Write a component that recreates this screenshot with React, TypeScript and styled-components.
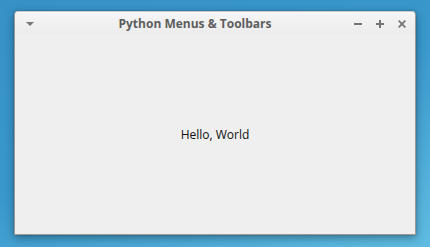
import React from "react";
import styled, { createGlobalStyle } from "styled-components";

const Global = createGlobalStyle`
  html, body { margin: 0; padding: 0; }
  body {
    width: 430px;
    height: 247px;
    overflow: hidden;
    background: linear-gradient(160deg, #3691c6 0%, #3a98cc 50%, #5fbde2 100%);
    font-family: "Open Sans", "Noto Sans", sans-serif;
  }
`;

const Desktop = styled.div`
  box-sizing: border-box;
  width: 430px;
  height: 247px;
  padding: 11px 14px 12px 14px;
  display: flex;
`;

const Window = styled.div`
  flex: 1;
  display: flex;
  flex-direction: column;
  background: #efefef;
  border: 1px solid #9a9a9a;
  border-top-color: #c8c8c8;
  border-radius: 4px 4px 0 0;
  box-shadow: 0 3px 10px rgba(0, 0, 0, 0.35), 0 0 2px rgba(0, 0, 0, 0.3);
  overflow: hidden;
`;

const TitleBar = styled.div`
  height: 21px;
  display: flex;
  align-items: center;
  padding: 0 5px 0 8px;
  background: linear-gradient(#f5f5f5, #ececec);
  border-top: 1px solid #fbfbfb;
`;

const TitleText = styled.div`
  flex: 1;
  text-align: center;
  font-weight: 700;
  font-size: 12px;
  color: #5e5e5e;
  padding-left: 9px;
`;

const IconButton = styled.div<{ $w?: number }>`
  width: ${(p) => p.$w ?? 16}px;
  height: 16px;
  display: flex;
  align-items: center;
  justify-content: center;
  margin-left: ${(p) => (p.$w ? 0 : 6)}px;
`;

const Content = styled.div`
  flex: 1;
  display: flex;
  align-items: center;
  justify-content: center;
  font-size: 12px;
  color: #111;
  padding-top: 1px;
`;

export default function App() {
  return (
    <>
      <Global />
      <Desktop>
        <Window>
          <TitleBar>
            <IconButton $w={14}>
              <svg width="10" height="6" viewBox="0 0 10 6">
                <path d="M1 1 L9 1 L5 5 Z" fill="#767676" />
              </svg>
            </IconButton>
            <TitleText>Python Menus &amp; Toolbars</TitleText>
            <IconButton>
              <svg width="8" height="8" viewBox="0 0 8 8">
                <path d="M0 4 H8" stroke="#747474" strokeWidth="2" />
              </svg>
            </IconButton>
            <IconButton>
              <svg width="8" height="8" viewBox="0 0 8 8">
                <path d="M0 4 H8 M4 0 V8" stroke="#747474" strokeWidth="2" />
              </svg>
            </IconButton>
            <IconButton>
              <svg width="8" height="8" viewBox="0 0 8 8">
                <path d="M0.7 0.7 L7.3 7.3 M7.3 0.7 L0.7 7.3" stroke="#747474" strokeWidth="1.8" />
              </svg>
            </IconButton>
          </TitleBar>
          <Content>Hello, World</Content>
        </Window>
      </Desktop>
    </>
  );
}
